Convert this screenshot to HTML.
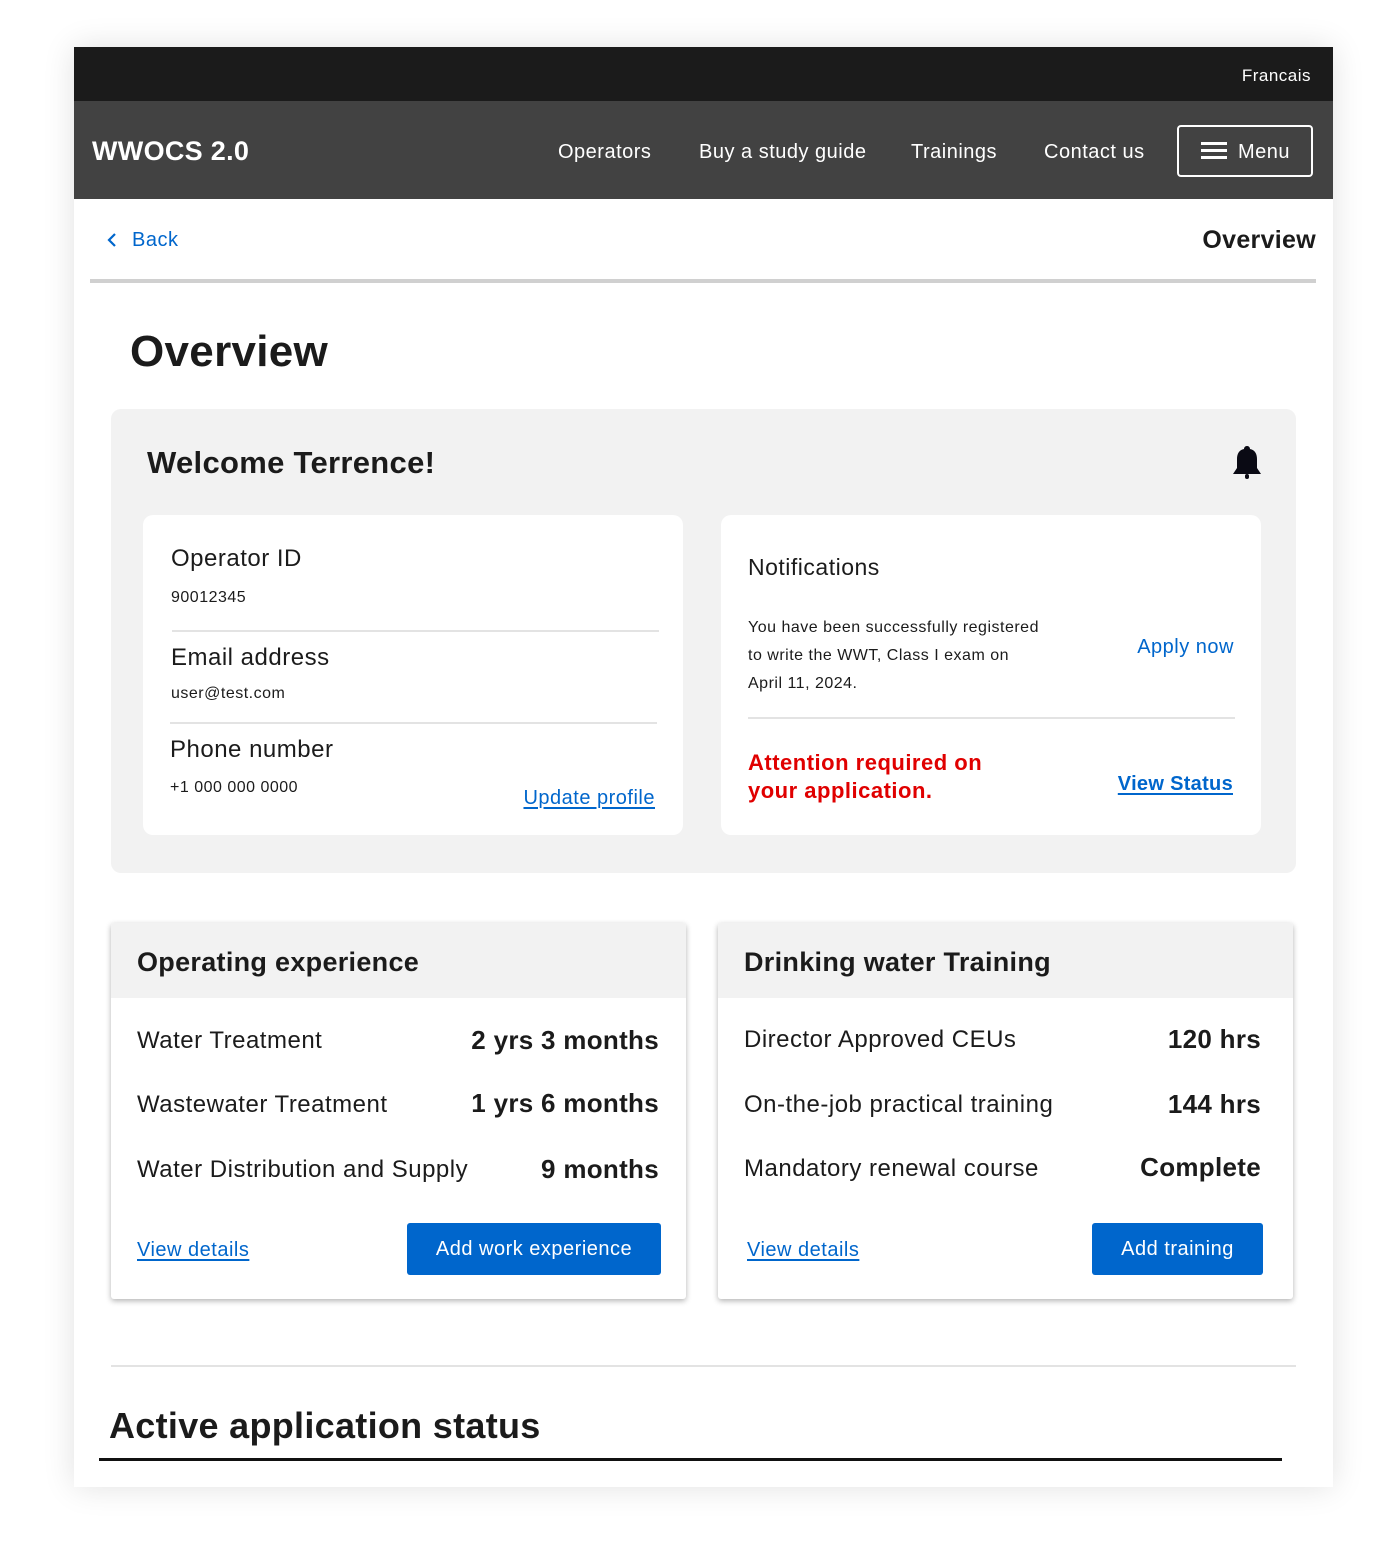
<!DOCTYPE html>
<html><head><meta charset="utf-8"><style>
*{margin:0;padding:0;box-sizing:border-box}
body{width:1381px;height:1561px;background:#fff;font-family:"Liberation Sans",sans-serif;position:relative;overflow:hidden;color:#1b1b1b;letter-spacing:0.5px}
.a{position:absolute;white-space:nowrap;line-height:40px;height:40px}
.frame{position:absolute;left:74px;top:47px;width:1259px;height:1440px;background:#fff;box-shadow:0 0 30px rgba(0,0,0,.12)}
.blue{color:#0066cc}
.u{text-decoration:underline;text-underline-offset:3px}
.b{font-weight:bold;letter-spacing:0.3px}
.box{position:absolute;background:#fff;border-radius:10px}
.hr{position:absolute;height:2px;background:#e3e3e3}
.card{position:absolute;background:#fff;box-shadow:0 2px 6px rgba(0,0,0,.3);border-radius:3px;overflow:hidden}
.btn{position:absolute;background:#0066cc;color:#fff;border-radius:3px;font-size:20px;text-align:center;line-height:52px;height:52px}
</style></head><body>
<div class="frame"></div>
<div style="position:absolute;left:74px;top:47px;width:1259px;height:54px;background:#1b1b1b"></div>
<div class="a" style="right:70px;top:56px;color:#fff;font-size:17px">Francais</div>
<div style="position:absolute;left:74px;top:101px;width:1259px;height:98px;background:#424242"></div>
<div class="a b" style="left:92px;top:131px;color:#fff;font-size:27px">WWOCS 2.0</div>
<div class="a" style="left:558px;top:132px;color:#fff;font-size:20px">Operators</div>
<div class="a" style="left:699px;top:132px;color:#fff;font-size:20px">Buy a study guide</div>
<div class="a" style="left:911px;top:132px;color:#fff;font-size:20px">Trainings</div>
<div class="a" style="left:1044px;top:132px;color:#fff;font-size:20px">Contact us</div>
<div style="position:absolute;left:1177px;top:125px;width:136px;height:52px;border:2px solid #fff;border-radius:4px"></div>
<div style="position:absolute;left:1201px;top:142px;width:26px;height:3px;background:#fff;box-shadow:0 7px 0 #fff,0 14px 0 #fff"></div>
<div class="a" style="left:1238px;top:132px;color:#fff;font-size:20px">Menu</div>

<svg style="position:absolute;left:106px;top:232px" width="12" height="16"><path d="M9 2 L3 8 L9 14" stroke="#0066cc" stroke-width="2.2" fill="none"/></svg>
<div class="a blue" style="left:132px;top:220px;font-size:20px">Back</div>
<div class="a b" style="right:65px;top:220px;font-size:25px">Overview</div>
<div style="position:absolute;left:90px;top:279px;width:1226px;height:4px;background:#d0d0d0"></div>

<div class="a b" style="left:130px;top:329px;font-size:44px;height:46px;line-height:46px">Overview</div>

<div style="position:absolute;left:111px;top:409px;width:1185px;height:464px;background:#f2f2f2;border-radius:10px"></div>
<div class="a b" style="left:147px;top:443px;font-size:31px">Welcome Terrence!</div>
<svg style="position:absolute;left:1230px;top:444px" width="34" height="38" viewBox="0 0 34 38"><path d="M17 2 C14 2 14 5 14 5 C9 6 7 10 7 15 L7 24 L3 30 L31 30 L27 24 L27 15 C27 10 25 6 20 5 C20 5 20 2 17 2 Z" fill="#0a0a14"/><rect x="15" y="30" width="4" height="5" rx="2" fill="#0a0a14"/></svg>

<div class="box" style="left:143px;top:515px;width:540px;height:320px"></div>
<div class="a" style="left:171px;top:539px;font-size:24px">Operator ID</div>
<div class="a" style="left:171px;top:578px;font-size:16px">90012345</div>
<div class="hr" style="left:172px;top:630px;width:487px"></div>
<div class="a" style="left:171px;top:638px;font-size:24px">Email address</div>
<div class="a" style="left:171px;top:674px;font-size:16px">user@test.com</div>
<div class="hr" style="left:170px;top:722px;width:487px"></div>
<div class="a" style="left:170px;top:730px;font-size:24px">Phone number</div>
<div class="a" style="left:170px;top:768px;font-size:16px">+1 000 000 0000</div>
<div class="a blue u" style="right:726px;top:778px;font-size:20px">Update profile</div>

<div class="box" style="left:721px;top:515px;width:540px;height:320px"></div>
<div class="a" style="left:748px;top:547px;font-size:23px">Notifications</div>
<div style="position:absolute;left:748px;top:614px;font-size:16px;line-height:28px;width:360px">You have been successfully registered<br>to write the WWT, Class I exam on<br>April 11, 2024.</div>
<div class="a blue" style="right:147px;top:627px;font-size:20px">Apply now</div>
<div class="hr" style="left:748px;top:717px;width:487px"></div>
<div style="position:absolute;left:748px;top:749px;font-size:22px;line-height:28px;color:#e00000;font-weight:bold;letter-spacing:0.5px">Attention required on<br>your application.</div>
<div class="a blue u b" style="right:148px;top:764px;font-size:20px">View Status</div>

<div class="card" style="left:111px;top:923px;width:575px;height:376px">
<div style="height:75px;background:#f2f2f2"></div></div>
<div class="a b" style="left:137px;top:942px;font-size:27px">Operating experience</div>
<div class="a" style="left:137px;top:1021px;font-size:24px">Water Treatment</div>
<div class="a b" style="right:722px;top:1020px;font-size:26px">2 yrs 3 months</div>
<div class="a" style="left:137px;top:1085px;font-size:24px">Wastewater Treatment</div>
<div class="a b" style="right:722px;top:1083px;font-size:26px">1 yrs 6 months</div>
<div class="a" style="left:137px;top:1150px;font-size:24px">Water Distribution and Supply</div>
<div class="a b" style="right:722px;top:1149px;font-size:26px">9 months</div>
<div class="a blue u" style="left:137px;top:1230px;font-size:20px">View details</div>
<div class="btn" style="left:407px;top:1223px;width:254px">Add work experience</div>

<div class="card" style="left:718px;top:923px;width:575px;height:376px">
<div style="height:75px;background:#f2f2f2"></div></div>
<div class="a b" style="left:744px;top:942px;font-size:27px">Drinking water Training</div>
<div class="a" style="left:744px;top:1020px;font-size:24px">Director Approved CEUs</div>
<div class="a b" style="right:120px;top:1019px;font-size:26px">120 hrs</div>
<div class="a" style="left:744px;top:1085px;font-size:24px">On-the-job practical training</div>
<div class="a b" style="right:120px;top:1084px;font-size:26px">144 hrs</div>
<div class="a" style="left:744px;top:1149px;font-size:24px">Mandatory renewal course</div>
<div class="a b" style="right:120px;top:1147px;font-size:26px">Complete</div>
<div class="a blue u" style="left:747px;top:1230px;font-size:20px">View details</div>
<div class="btn" style="left:1092px;top:1223px;width:171px">Add training</div>

<div class="hr" style="left:111px;top:1365px;width:1185px"></div>
<div class="a b" style="left:109px;top:1403px;font-size:36px;height:46px;line-height:46px">Active application status</div>
<div style="position:absolute;left:99px;top:1458px;width:1183px;height:3px;background:#111"></div>
</body></html>
